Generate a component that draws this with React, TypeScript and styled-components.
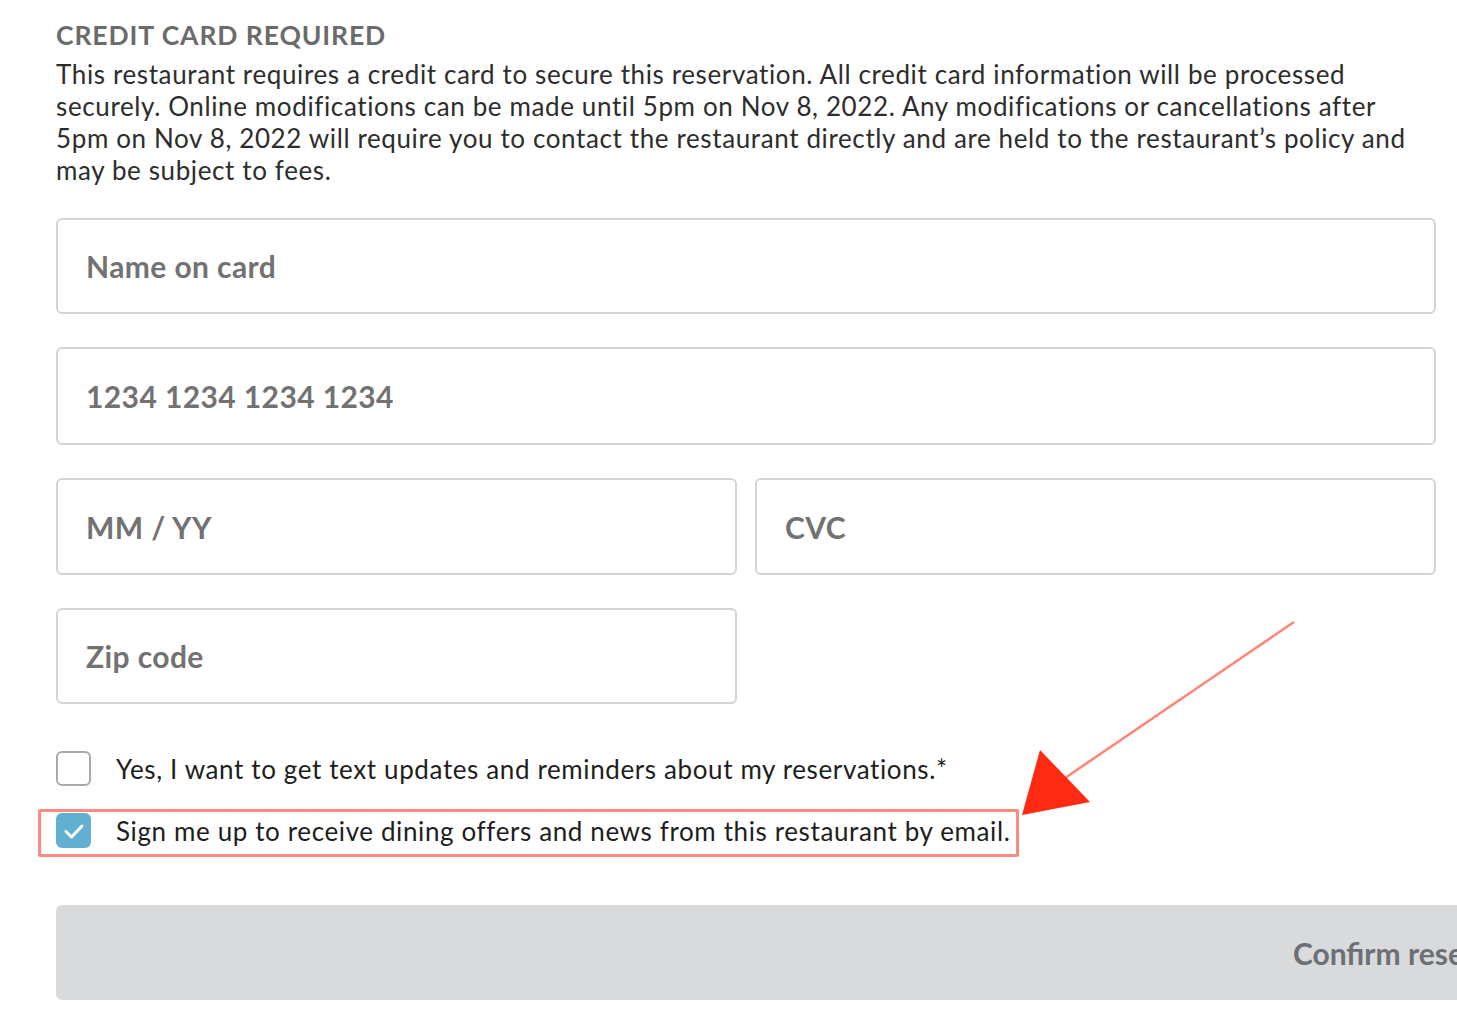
import React from "react";
import styled, { createGlobalStyle } from "styled-components";

const Global = createGlobalStyle`
  html, body { margin: 0; padding: 0; background: #fff; overflow: hidden; }
  body { font-family: Lato, "Open Sans", sans-serif; }
`;

const Page = styled.div`
  position: relative;
  width: 1457px;
  height: 1027px;
  overflow: hidden;
  padding: 19px 0 0 56px;
  box-sizing: border-box;
`;

const Section = styled.div`
  width: 1380px;
  display: flex;
  flex-direction: column;
`;

const Heading = styled.h2`
  margin: 0;
  font-size: 26.5px;
  line-height: 32px;
  font-weight: 700;
  color: #6b6b6b;
  letter-spacing: 0.9px;
`;

const Body = styled.p`
  margin: 7px 0 0;
  font-size: 26px;
  line-height: 32px;
  color: #2d2d2d;
  letter-spacing: 0.62px;
  white-space: nowrap;
`;

const Fields = styled.div`
  margin-top: 32px;
  display: grid;
  grid-template-columns: 1fr 1fr;
  column-gap: 18px;
  row-gap: 33px;
`;

const Field = styled.div<{ $span?: boolean; $h?: number }>`
  grid-column: ${(p) => (p.$span ? "1 / span 2" : "auto")};
  height: ${(p) => p.$h ?? 96}px;
  box-sizing: border-box;
  border: 2px solid #d4d4d4;
  border-radius: 6px;
  display: flex;
  align-items: center;
  padding-left: 28px;
  font-size: 30px;
  font-weight: 700;
  color: #727272;
  letter-spacing: 0.4px;
`;

const Checks = styled.div`
  margin-top: 47px;
  display: flex;
  flex-direction: column;
  gap: 27px;
`;

const CheckRow = styled.label`
  display: flex;
  align-items: center;
  gap: 25px;
  font-size: 26px;
  letter-spacing: 0.62px;
  color: #1e1e1e;
`;

const Box = styled.span<{ $checked?: boolean }>`
  width: 35px;
  height: 35px;
  box-sizing: border-box;
  border-radius: 6px;
  border: ${(p) => (p.$checked ? "none" : "2px solid #a9a9a9")};
  background: ${(p) => (p.$checked ? "#62b0d1" : "#fff")};
  display: flex;
  align-items: center;
  justify-content: center;
  flex-shrink: 0;
`;

const ButtonWrap = styled.div`
  margin-top: 57px;
  width: 2740px;
`;

const Button = styled.button`
  width: 100%;
  height: 95px;
  border: none;
  border-radius: 6px;
  background: #d9dadc;
  font-family: Lato, sans-serif;
  font-size: 30px;
  font-weight: 700;
  color: #6c7076;
  padding: 0;
`;

const Highlight = styled.div`
  position: absolute;
  left: 38px;
  top: 809px;
  width: 981px;
  height: 48px;
  box-sizing: border-box;
  border: 3px solid #ff8a80;
  border-radius: 2px;
`;

const Arrow = styled.svg`
  position: absolute;
  left: 0;
  top: 0;
  pointer-events: none;
`;

export default function App() {
  return (
    <>
      <Global />
      <Page>
        <Section>
          <Heading>CREDIT CARD REQUIRED</Heading>
          <Body>
            This restaurant requires a credit card to secure this reservation. All credit card information will be processed
            <br />
            securely. Online modifications can be made until 5pm on Nov 8, 2022. Any modifications or cancellations after
            <br />
            5pm on Nov 8, 2022 will require you to contact the restaurant directly and are held to the restaurant’s policy and
            <br />
            may be subject to fees.
          </Body>
          <Fields>
            <Field $span $h={96}>Name on card</Field>
            <Field $span $h={98}>1234 1234 1234 1234</Field>
            <Field $h={97}>MM / YY</Field>
            <Field $h={97}>CVC</Field>
            <Field $h={96}>Zip code</Field>
          </Fields>
          <Checks>
            <CheckRow>
              <Box />
              Yes, I want to get text updates and reminders about my reservations.*
            </CheckRow>
            <CheckRow>
              <Box $checked>
                <svg width="22" height="18" viewBox="0 0 22 18">
                  <path d="M3 9.5l5.5 5.5L19 4" fill="none" stroke="#fff" strokeWidth="3" strokeLinecap="round" strokeLinejoin="round" />
                </svg>
              </Box>
              Sign me up to receive dining offers and news from this restaurant by email.
            </CheckRow>
          </Checks>
          <ButtonWrap>
            <Button>Confirm reservation</Button>
          </ButtonWrap>
        </Section>
        <Highlight />
        <Arrow width="1457" height="1027" viewBox="0 0 1457 1027">
          <line x1="1294" y1="622" x2="1065" y2="778" stroke="#ff8577" strokeWidth="2.5" />
          <polygon points="1040,750 1090,802 1022,815" fill="#ff2a12" />
        </Arrow>
      </Page>
    </>
  );
}
